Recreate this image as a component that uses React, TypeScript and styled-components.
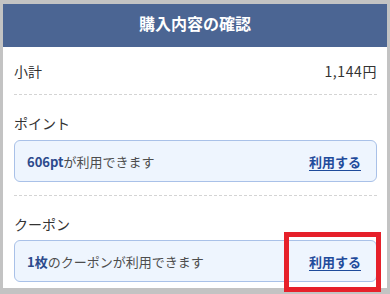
import React from "react";
import styled, { createGlobalStyle } from "styled-components";

const GlobalStyle = createGlobalStyle`
  html, body {
    margin: 0;
    padding: 0;
    background: #c3c3c3;
  }
  body {
    font-family: "Noto Sans CJK JP", "Noto Sans", sans-serif;
    -webkit-font-smoothing: antialiased;
  }
`;

const Frame = styled.div`
  position: relative;
  width: 390px;
  height: 294px;
  box-sizing: border-box;
  padding: 4px 3px 5px 3px;
  overflow: hidden;
`;

const Panel = styled.div`
  background: #ffffff;
  display: flex;
  flex-direction: column;
`;

const Header = styled.div`
  height: 43px;
  background: #4b6593;
  color: #ffffff;
  font-size: 16px;
  font-weight: 700;
  display: flex;
  align-items: center;
  justify-content: center;
  padding-bottom: 6px;
  box-sizing: border-box;
`;

const Body = styled.div`
  padding: 0 10px 0 11px;
  display: flex;
  flex-direction: column;
`;

const Row = styled.div`
  display: flex;
  justify-content: space-between;
  align-items: center;
  padding: 14px 0 13px;
  line-height: 20px;
  font-size: 14px;
  color: #333333;
  border-bottom: 1px dashed #d4d4d4;
`;

const Amount = styled.span`
  letter-spacing: 0.6px;
`;

const Section = styled.div<{ $top: number; $bottom: number; $last?: boolean }>`
  display: flex;
  flex-direction: column;
  padding: ${(p) => p.$top}px 0 ${(p) => p.$bottom}px;
  border-bottom: ${(p) => (p.$last ? "none" : "1px dashed #d4d4d4")};
`;

const Label = styled.div<{ $gap: number }>`
  font-size: 14px;
  line-height: 20px;
  color: #333333;
  margin-bottom: ${(p) => p.$gap}px;
`;

const Card = styled.div`
  height: 42px;
  box-sizing: border-box;
  border: 1px solid #a9c1e8;
  border-radius: 6px;
  background: #eef5fe;
  display: flex;
  align-items: center;
  justify-content: space-between;
  padding: 0 15px 0 12px;
  font-size: 13px;
`;

const Info = styled.span`
  color: #4d4d4d;
`;

const Strong = styled.b`
  color: #2c4a8c;
  font-weight: 700;
`;

const UseLink = styled.a`
  color: #1f4b9b;
  font-weight: 700;
  text-decoration: underline;
  text-underline-offset: 3px;
  cursor: pointer;
`;

const Highlight = styled.div`
  position: absolute;
  left: 284px;
  top: 232px;
  width: 97px;
  height: 60px;
  box-sizing: border-box;
  border: 5px solid #e6202a;
  pointer-events: none;
`;

export default function App() {
  return (
    <>
      <GlobalStyle />
      <Frame>
        <Panel>
          <Header>購入内容の確認</Header>
          <Body>
            <Row>
              <span>小計</span>
              <Amount>1,144円</Amount>
            </Row>
            <Section $top={18} $bottom={13}>
              <Label $gap={7}>ポイント</Label>
              <Card>
                <Info>
                  <Strong>606pt</Strong>が利用できます
                </Info>
                <UseLink>利用する</UseLink>
              </Card>
            </Section>
            <Section $top={18} $bottom={6} $last>
              <Label $gap={6}>クーポン</Label>
              <Card>
                <Info>
                  <Strong>1枚</Strong>のクーポンが利用できます
                </Info>
                <UseLink>利用する</UseLink>
              </Card>
            </Section>
          </Body>
        </Panel>
        <Highlight />
      </Frame>
    </>
  );
}
